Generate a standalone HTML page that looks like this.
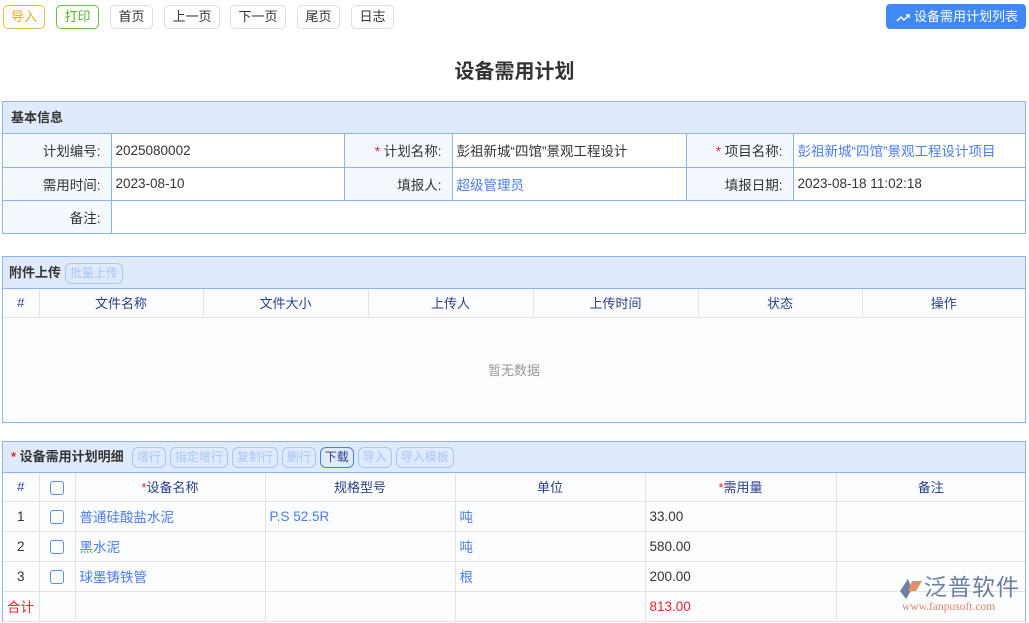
<!DOCTYPE html>
<html><head><meta charset="utf-8"><style>
*{box-sizing:border-box;margin:0;padding:0}
body{width:1029px;height:623px;background:#fff;font-family:"Liberation Sans","Noto Sans CJK SC",sans-serif;font-size:13px;color:#333;position:relative;overflow:hidden}
.abs{position:absolute}
.btn{position:absolute;top:5px;height:24px;border:1px solid #dcdfe6;border-radius:5px;line-height:22px;text-align:center;font-size:13px;color:#333;background:#fff}
.box{position:absolute;left:2px;width:1024px;border:1px solid #8db3f2}
.hd{background:#dfeafd;border-bottom:1px solid #8db3f2;font-weight:bold;font-size:13px;color:#333;padding-left:8px;position:relative}
table{border-collapse:collapse;width:100%;table-layout:fixed}
td,th{font-weight:normal}
.info td{border:1px solid #8db3f2;height:33px;padding:0 4px;font-size:13.5px}
.info tr:first-child td{border-top:none}
.info td:first-child{border-left:none}
.info td:last-child{border-right:none}
.info tr:last-child td{border-bottom:none}
.lb{background:#f4f8ff;text-align:right;padding-right:10px!important}
.blue{color:#4a7cf0}
.red{color:#f5222d}
.g th{border:1px solid #e2e2e2;border-top:none;height:28px;text-align:center;color:#2a3f8c;background:#fbfdfe}
.g td{border:1px solid #e2e2e2;height:30px;padding:0 4px;background:#fbfdfe;font-size:13.5px}
.g tr td:first-child,.g tr th:first-child{border-left:none}
.g tr td:last-child,.g tr th:last-child{border-right:none}
.sb{display:inline-block;height:21px;line-height:19px;border:1px solid #a9c6f5;border-radius:6px;color:#a9c6f5;font-size:12px;font-weight:normal;padding:0 4px;margin-left:4px;vertical-align:middle}
.cb{display:inline-block;width:14px;height:14px;border:1px solid #5b8ef0;border-radius:3px;vertical-align:middle;background:#fff}
</style></head><body>
<div class="btn" style="left:3px;width:42px;border-color:#f5b33a;color:#f5a623">导入</div>
<div class="btn" style="left:56px;width:43px;border-color:#67c23a;color:#52b31c">打印</div>
<div class="btn" style="left:110px;width:43px">首页</div>
<div class="btn" style="left:164px;width:56px">上一页</div>
<div class="btn" style="left:230px;width:56px">下一页</div>
<div class="btn" style="left:297px;width:43px">尾页</div>
<div class="btn" style="left:351px;width:43px">日志</div>
<div class="abs" style="left:886px;top:4px;width:140px;height:25px;background:#4088f4;border-radius:4px;color:#fff;line-height:25px;font-size:13px;padding-left:10px">
<svg width="14" height="10" viewBox="0 0 14 10" style="vertical-align:middle;margin-right:4px"><path d="M1 8 L5 4 L8 7 L13 2 M10 2 H13 V5" stroke="#fff" stroke-width="1.5" fill="none"/></svg>设备需用计划列表</div>
<div class="abs" style="left:0;width:1029px;top:55px;text-align:center;font-size:20px;font-weight:bold;color:#333">设备需用计划</div>

<div class="box" style="top:101px;height:133px">
<div class="hd" style="height:32px;line-height:31px">基本信息</div>
<table class="info">
<colgroup><col style="width:108px"><col style="width:233px"><col style="width:108px"><col style="width:234px"><col style="width:107px"><col></colgroup>
<tr><td class="lb">计划编号:</td><td>2025080002</td><td class="lb"><span class="red">*</span> 计划名称:</td><td>彭祖新城“四馆”景观工程设计</td><td class="lb"><span class="red">*</span> 项目名称:</td><td class="blue">彭祖新城“四馆”景观工程设计项目</td></tr>
<tr><td class="lb">需用时间:</td><td>2023-08-10</td><td class="lb">填报人:</td><td class="blue">超级管理员</td><td class="lb">填报日期:</td><td>2023-08-18 11:02:18</td></tr>
<tr><td class="lb">备注:</td><td colspan="5"></td></tr>
</table></div>

<div class="box" style="top:256px;height:167px;background:#fbfdfe">
<div class="hd" style="height:32px;line-height:31px;padding-left:6px">附件上传<span class="sb">批量上传</span></div>
<table class="g">
<colgroup><col style="width:36px"><col style="width:164px"><col style="width:165px"><col style="width:165px"><col style="width:165px"><col style="width:164px"><col></colgroup>
<tr><th>#</th><th>文件名称</th><th>文件大小</th><th>上传人</th><th>上传时间</th><th>状态</th><th>操作</th></tr>
</table>
<div style="text-align:center;color:#999;margin-top:42px">暂无数据</div>
</div>

<div class="box" style="top:441px;height:181px">
<div class="hd" style="height:31px;line-height:30px;padding-left:8px"><span class="red">*</span> 设备需用计划明细<span class="sb" style="margin-left:8px">增行</span><span class="sb">指定增行</span><span class="sb">复制行</span><span class="sb">删行</span><span class="sb" style="border-color:#4a7cf0;color:#2a3f8c">下载</span><span class="sb">导入</span><span class="sb">导入模板</span></div>
<table class="g">
<colgroup><col style="width:36px"><col style="width:36px"><col style="width:190px"><col style="width:190px"><col style="width:190px"><col style="width:191px"><col></colgroup>
<tr><th>#</th><th><span class="cb"></span></th><th><span class="red">*</span>设备名称</th><th>规格型号</th><th>单位</th><th><span class="red">*</span>需用量</th><th>备注</th></tr>
<tr><td style="text-align:center">1</td><td style="text-align:center"><span class="cb"></span></td><td class="blue">普通硅酸盐水泥</td><td class="blue">P.S 52.5R</td><td class="blue">吨</td><td>33.00</td><td></td></tr>
<tr><td style="text-align:center">2</td><td style="text-align:center"><span class="cb"></span></td><td class="blue">黑水泥</td><td></td><td class="blue">吨</td><td>580.00</td><td></td></tr>
<tr><td style="text-align:center">3</td><td style="text-align:center"><span class="cb"></span></td><td class="blue">球墨铸铁管</td><td></td><td class="blue">根</td><td>200.00</td><td></td></tr>
<tr><td class="red" style="padding-left:4px">合计</td><td></td><td></td><td></td><td></td><td class="red">813.00</td><td></td></tr>
</table></div>

<div class="abs" style="left:898px;top:576px;width:126px;height:40px">
<svg width="26" height="24" viewBox="0 0 26 24" style="position:absolute;left:0;top:1px"><path d="M10 2 L2 14 L8 22 L14 12 Z" fill="#6c7fa0"/><path d="M14 4 L24 4 L18 14 L10 14 Z" fill="#e3906a"/></svg>
<div class="abs" style="left:26px;top:-2px;font-size:23px;color:#6c7fa0;letter-spacing:1px;line-height:26px;white-space:nowrap">泛普软件</div>
<div class="abs" style="left:4px;top:24px;font-size:11.5px;color:#d9896a;font-family:'Liberation Serif',serif;line-height:14px;white-space:nowrap">www.fanpusoft.com</div>
</div>
</body></html>
